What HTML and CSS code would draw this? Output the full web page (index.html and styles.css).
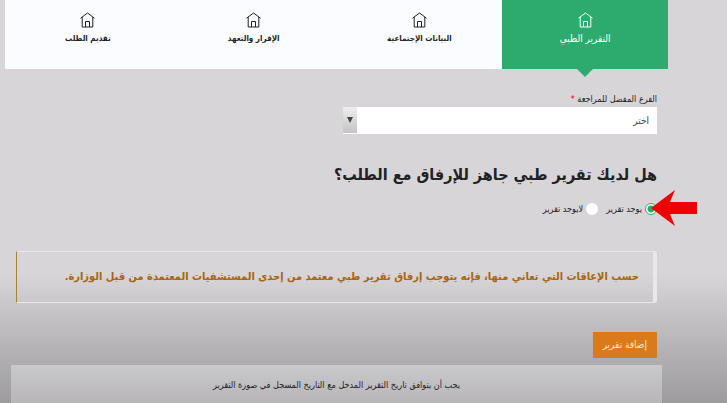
FILE: index.html
```html
<!DOCTYPE html>
<html lang="ar" dir="rtl">
<head>
	<meta charset="UTF-8">
	<title>التقرير الطبي</title>
	<link rel="stylesheet" href="styles.css">
</head>
<body>
	<svg class="defs" width="0" height="0">
		<symbol id="home" viewBox="0 0 15 16">
			<path d="M.5 6.200L7.500 1l7 5.200M2.200 5v10h10.600V5M5.500 15V9.500h4V15"/>
		</symbol>
	</svg>
	<nav class="steps">
		<a href="#report" class="step active">
			<svg class="icon"><use href="#home"/></svg>
			<span>التقرير الطبي</span>
		</a>
		<a href="#social" class="step">
			<svg class="icon"><use href="#home"/></svg>
			<span>البيانات الإجتماعية</span>
		</a>
		<a href="#pledge" class="step">
			<svg class="icon"><use href="#home"/></svg>
			<span>الإقرار والتعهد</span>
		</a>
		<a href="#submit" class="step">
			<svg class="icon"><use href="#home"/></svg>
			<span>تقديم الطلب</span>
		</a>
	</nav>
	<main class="content">
		<form class="form">
			<div class="field">
				<label for="branch">الفرع المفضل للمراجعة <span class="required">*</span></label>
				<div class="select">
					<select id="branch">
						<option>اختر</option>
					</select>
					<svg class="arrow" viewBox="0 0 14 26"><path d="M4 10h6l-3 6z"/></svg>
				</div>
			</div>
			<h2>هل لديك تقرير طبي جاهز للإرفاق مع الطلب؟</h2>
			<div class="options">
				<div class="option">
					<input type="radio" name="report" id="yes" checked>
					<label for="yes">يوجد تقرير</label>
					<svg class="pointer" viewBox="0 0 46 36"><path d="M0 18L24 0l-5 12h27v12H19l5 12z"/></svg>
				</div>
				<div class="option">
					<input type="radio" name="report" id="no">
					<label for="no">لايوجد تقرير</label>
				</div>
			</div>
			<p class="alert">حسب الإعاقات التي تعاني منها، فإنه يتوجب إرفاق تقرير طبي معتمد من إحدى المستشفيات المعتمدة من قبل الوزارة.</p>
			<button type="button" class="add">إضافة تقرير</button>
		</form>
		<p class="notice">يجب أن يتوافق تاريخ التقرير المدخل مع التاريخ المسجل في صورة التقرير</p>
	</main>
</body>
</html>
```
FILE: styles.css
```css
* {
	box-sizing: border-box;
}
body {
	background: linear-gradient(#d7d5d8 68%, #b4b2b5 87%, #9d9b9e) fixed;
	color: #222;
	display: flex;
	flex-direction: column;
	font: 10px/16px "DejaVu Sans Condensed", "DejaVu Sans", sans-serif;
	margin: 0;
	min-height: 100vh;
	padding: 0 59px 0 5px;
}
.defs {
	position: absolute;
}

/* steps */
.steps {
	background-color: #fbfcff;
	display: flex;
}
.step {
	align-items: center;
	color: #222;
	display: flex;
	flex: 1;
	flex-direction: column;
	font-size: 8px;
	font-weight: bold;
	gap: 3px;
	height: 69px;
	padding-top: 12px;
	position: relative;
	text-decoration: none;
}
.step .icon {
	fill: none;
	height: 16px;
	stroke: currentColor;
	width: 15px;
}
.step.active {
	background-color: #2dab6e;
	color: #fff;
	font-size: 10px;
	font-weight: normal;
}
.step.active::after {
	border: 8px solid transparent;
	border-bottom: none;
	border-top-color: #2dab6e;
	content: "";
	position: absolute;
	top: 100%;
}

/* content */
.content {
	display: flex;
	flex: 1;
	flex-direction: column;
	padding: 22px 6px 0;
}
.form {
	padding: 0 5px;
}
.field {
	width: 49%;
}
.field label {
	display: block;
	font-size: 9px;
}
.required {
	color: #e00;
}
.select {
	position: relative;
}
.select select {
	appearance: none;
	background-color: #fff;
	border: none;
	border-radius: 0;
	color: #444;
	display: block;
	font: inherit;
	height: 27px;
	padding: 0 8px;
	width: 100%;
}
.select .arrow {
	background: linear-gradient(#eee, #c4c4c6);
	fill: #444;
	height: 26px;
	left: 0;
	pointer-events: none;
	position: absolute;
	top: 0;
	width: 14px;
}
h2 {
	font-size: 16px;
	line-height: 28px;
	margin: 27px 0 12px;
}

/* options */
.options {
	display: flex;
	font-size: 9px;
	gap: 8px;
}
.option {
	align-items: center;
	display: flex;
	gap: 3px;
	position: relative;
}
.option input {
	appearance: none;
	background-color: #fff;
	border-radius: 50%;
	height: 12px;
	margin: 0;
	width: 12px;
}
.option input:checked {
	background: radial-gradient(#2dab6e 3px, #fff 4px);
	border: 1px solid #2dab6e;
}
.option .pointer {
	fill: #ee0202;
	height: 36px;
	position: absolute;
	right: -40px;
	top: -11px;
	width: 46px;
}

/* alert */
.alert {
	border: 1px solid #e8e7e9;
	border-left-color: #b0812f;
	border-radius: 0 3px 3px 0;
	border-right-width: 4px;
	color: #a8660f;
	font-size: 11px;
	font-weight: bold;
	line-height: 20px;
	margin: 34px 0 29px;
	padding: 15px 14px;
}
.add {
	background-color: #d97b1c;
	border: none;
	color: #fbe6c4;
	display: block;
	font: inherit;
	height: 26px;
	padding: 0 10px;
}
.notice {
	background: linear-gradient(#c9c8ca, #b7b5b8);
	flex: 1;
	font-size: 9px;
	margin: 7px 0 0;
	padding: 12px 0 10px;
	text-align: center;
}
```
